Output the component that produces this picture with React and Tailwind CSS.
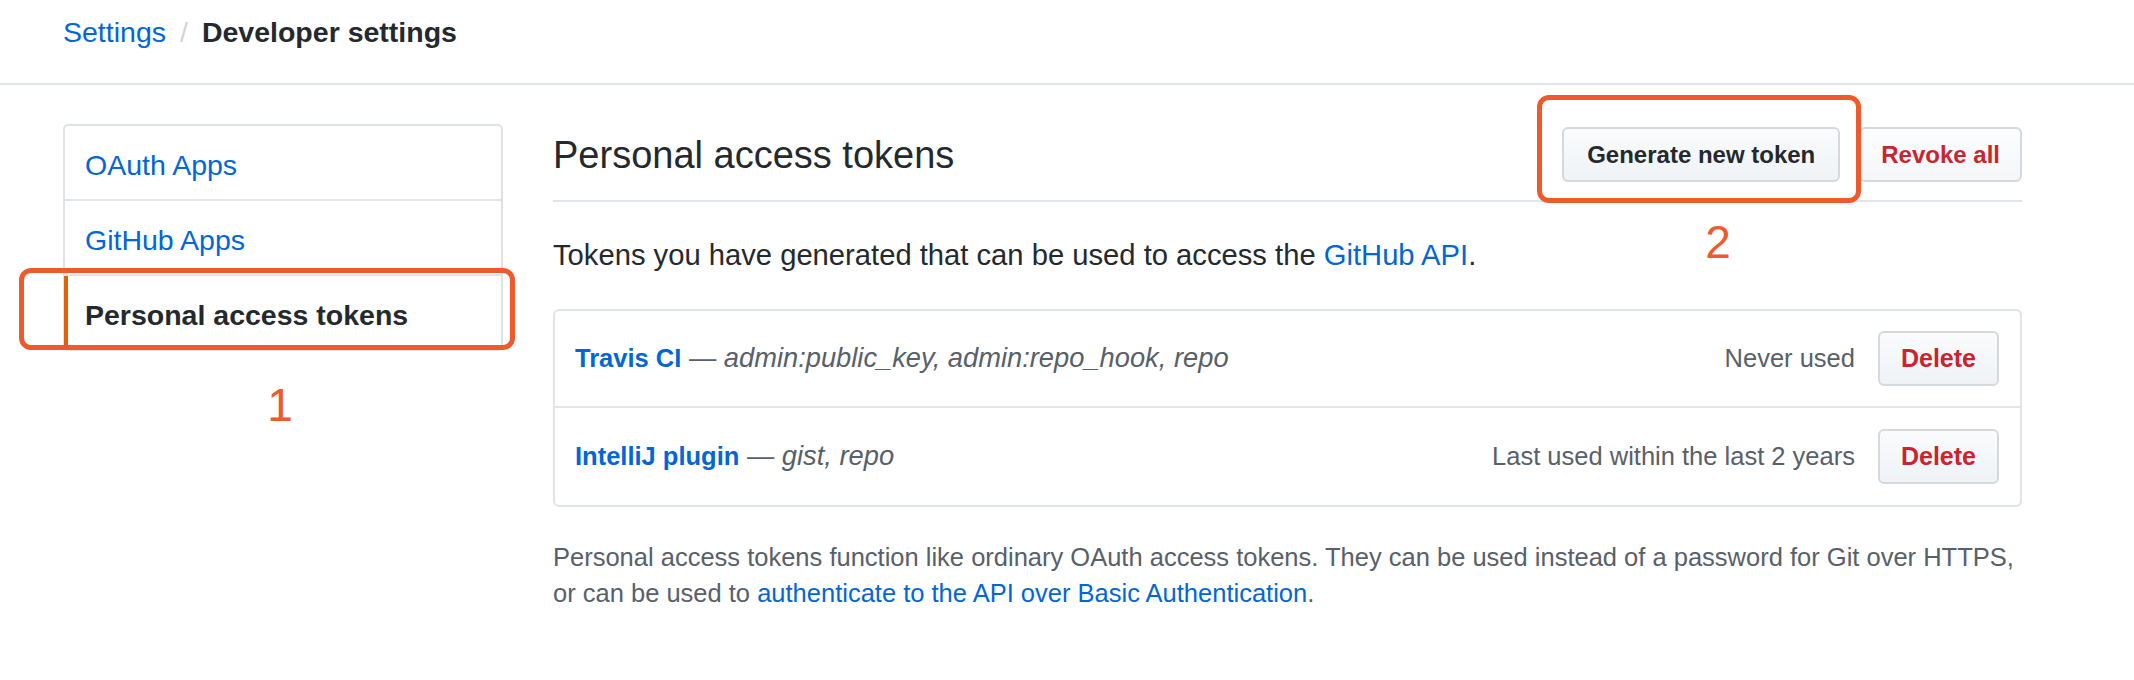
import React from 'react'

const tokens = [
  { name: 'Travis CI', scopes: 'admin:public_key, admin:repo_hook, repo', used: 'Never used' },
  { name: 'IntelliJ plugin', scopes: 'gist, repo', used: 'Last used within the last 2 years' },
]

const menu = [
  { label: 'OAuth Apps' },
  { label: 'GitHub Apps' },
  { label: 'Personal access tokens', active: true },
]

export default function App() {
  return (
    <div className="relative w-full min-h-[680px] bg-white text-[#24292e] font-['Liberation_Sans',Arial,sans-serif]">
      {/* Breadcrumb */}
      <div className="h-[85px] border-b-2 border-[#e1e4e8] pl-[63px] pt-[11px]">
        <div className="flex items-center text-[28.5px] leading-[42px]">
          <span className="text-[#0366d6]">Settings</span>
          <span className="mx-[14px] text-[#d1d5da]">/</span>
          <span className="font-bold">Developer settings</span>
        </div>
      </div>

      <div className="flex pl-[63px] pt-[39px]">
        {/* Sidebar */}
        <nav className="w-[440px] shrink-0 self-start border-2 border-[#dfe2e5] rounded-[5px]">
          {menu.map((item, i) => (
            <div
              key={item.label}
              className={
                'relative flex items-center pl-[20px] pt-[6px] text-[28.5px] ' +
                (i < menu.length - 1 ? 'h-[75px] border-b-2 border-[#e1e4e8] ' : 'h-[73px] ') +
                (item.active ? 'font-bold text-[#24292e]' : 'text-[#0366d6]')
              }
            >
              {item.active && (
                <span className="absolute left-[-1px] top-0 bottom-0 w-[4px] bg-[#e36209]" />
              )}
              {item.label}
            </div>
          ))}
        </nav>

        {/* Content */}
        <div className="ml-[50px] w-[1469px]">
          <div className="flex items-center justify-between pt-[3px] pb-[18px] border-b-2 border-[#e1e4e8]">
            <h2 className="text-[38px] leading-[46px] font-normal">Personal access tokens</h2>
            <div className="flex gap-[19px]">
              <button className="h-[55px] px-[23px] border-2 border-[#d5d8dc] rounded-[6px] bg-gradient-to-b from-[#fafbfc] to-[#eff3f6] text-[24px] font-bold text-[#24292e]">
                Generate new token
              </button>
              <button className="h-[55px] px-[20px] border-2 border-[#d5d8dc] rounded-[6px] bg-gradient-to-b from-[#fcfdfd] to-[#f4f6f8] text-[24px] font-bold text-[#cb2431]">
                Revoke all
              </button>
            </div>
          </div>

          <p className="mt-[32px] text-[29.2px] leading-[42px]">
            Tokens you have generated that can be used to access the{' '}
            <span className="text-[#0366d6]">GitHub API</span>.
          </p>

          <div className="mt-[33px] border-2 border-[#e1e4e8] rounded-[6px]">
            {tokens.map((t, i) => (
              <div
                key={t.name}
                className={
                  'h-[97px] flex items-center justify-between pl-[20px] pr-[21px] text-[25.5px] ' +
                  (i < tokens.length - 1 ? 'border-b-2 border-[#e1e4e8]' : '')
                }
              >
                <div className="whitespace-nowrap">
                  <span className="font-bold text-[#0366d6]">{t.name}</span>
                  <span className="text-[#586069] text-[27.3px]"> — <em>{t.scopes}</em></span>
                </div>
                <div className="flex items-center gap-[23px]">
                  <span className="text-[#586069]">{t.used}</span>
                  <button className="h-[55px] px-[21px] border-2 border-[#d5d8dc] rounded-[6px] bg-gradient-to-b from-[#fafbfc] to-[#eff3f6] text-[25px] font-bold text-[#cb2431]">
                    Delete
                  </button>
                </div>
              </div>
            ))}
          </div>

          <p className="mt-[32px] whitespace-nowrap text-[25.5px] leading-[36px] text-[#586069]">
            Personal access tokens function like ordinary OAuth access tokens. They can be used instead of a password for Git over HTTPS,
            <br />
            or can be used to{' '}
            <span className="text-[#0366d6]">authenticate to the API over Basic Authentication</span>.
          </p>
        </div>
      </div>

      {/* Annotations */}
      <div className="absolute left-[19px] top-[268px] w-[496px] h-[82px] border-[5px] border-[#ee5a2b] rounded-[12px]" />
      <div className="absolute left-[260px] top-[382px] w-[40px] text-center text-[46px] leading-none text-[#ee5a2b] font-light">1</div>
      <div className="absolute left-[1537px] top-[95px] w-[324px] h-[108px] border-[5px] border-[#ee5a2b] rounded-[12px]" />
      <div className="absolute left-[1698px] top-[219px] w-[40px] text-center text-[46px] leading-none text-[#ee5a2b] font-light">2</div>
    </div>
  )
}
